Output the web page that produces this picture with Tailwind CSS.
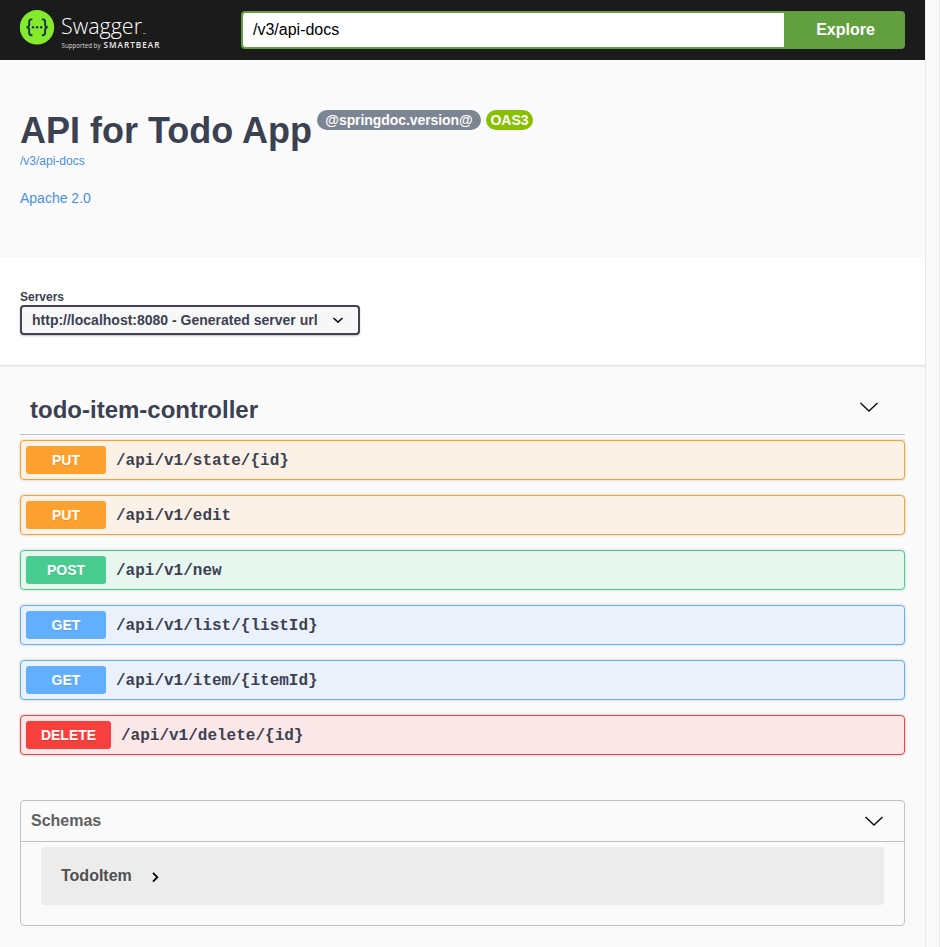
<!DOCTYPE html>
<html lang="en">
<head>
<meta charset="utf-8">
<title>Swagger UI</title>
<script src="https://cdn.jsdelivr.net/npm/@tailwindcss/browser@4"></script>
</head>
<body class="h-[947px] overflow-hidden bg-[#fafafa] font-['Liberation_Sans',Arial,sans-serif] text-[#3b4151]">
<div class="flex h-[947px]">
<div class="w-[925px] shrink-0">
  <header class="flex h-[60px] items-center bg-[#1b1b1b] pl-5 pr-5">
    <svg class="h-[60px] w-[221px] shrink-0" viewBox="20 0 221 60">
      <circle cx="37" cy="27.3" r="17.2" fill="#85ea2d"/>
      <g fill="none" stroke="#173647" stroke-width="1.9">
        <path d="M32.4 19.4h-.9q-2.3 0-2.3 2.4v2.7q0 2.7-2.6 2.8q2.6.1 2.6 2.8v2.7q0 2.4 2.3 2.4h.9"/>
        <path d="M41.9 19.4h.9q2.3 0 2.3 2.4v2.7q0 2.7 2.6 2.8q-2.6.1-2.6 2.8v2.7q0 2.4-2.3 2.4h-.9"/>
      </g>
      <g fill="#173647"><circle cx="33" cy="27.3" r="1.2"/><circle cx="37.1" cy="27.3" r="1.2"/><circle cx="41.2" cy="27.3" r="1.2"/></g>
      <text x="61" y="34.3" font-size="22.5" font-weight="300" textLength="81" lengthAdjust="spacingAndGlyphs" fill="#fff" class="font-['Open_Sans',sans-serif]">Swagger</text>
      <path d="M143 33.5h3" stroke="#999" stroke-width=".8"/>
      <text x="61.5" y="48.3" font-size="6.2" textLength="39" fill="#ddd" class="font-['Open_Sans',sans-serif]">Supported by</text>
      <text x="103.5" y="48.3" font-size="8.2" font-weight="600" textLength="56" fill="#eee" class="font-['Open_Sans',sans-serif]">SMARTBEAR</text>
    </svg>
    <div class="flex h-[38px] w-[664px] overflow-hidden rounded border-2 border-[#62a03f] bg-[#62a03f]">
      <div class="flex w-[541px] items-center rounded-l-[2px] bg-white pl-[10px] pb-px text-base text-black">/v3/api-docs</div>
      <div class="flex flex-1 items-center justify-center pb-px pl-[4px] text-base font-bold text-white">Explore</div>
    </div>
  </header>

  <section class="h-[197px] px-5 pt-[50px]">
    <div class="flex h-[42px] items-start">
      <h1 class="w-[297px] whitespace-nowrap text-[36px] font-bold leading-[42px]">API for Todo App</h1>
      <span class="flex h-5 w-[164px] items-center justify-center rounded-full bg-[#7d8492] text-[14px] font-bold tracking-[-0.07px] text-white">@springdoc.version@</span>
      <span class="ml-[5px] flex h-5 w-[47px] items-center justify-center rounded-full bg-[#89bf04] text-[14px] font-bold text-white">OAS3</span>
    </div>
    <div class="text-[12px] leading-[18px] text-[#4990e2]">/v3/api-docs</div>
    <div class="mt-5 text-[14px] leading-4 text-[#4990e2]">Apache 2.0</div>
  </section>

  <section class="h-[108px] bg-white px-5 pt-8 shadow-[0_1px_2px_rgba(0,0,0,0.15)]">
    <div class="text-[12px] font-bold leading-4">Servers</div>
    <div class="flex h-[30px] w-[340px] items-center rounded border-2 border-[#41444e] bg-[#f7f7f7] pl-[10px] shadow-[0_1px_2px_rgba(0,0,0,0.25)]">
      <span class="w-[300px] whitespace-nowrap text-[14px] font-bold">http://localhost:8080 - Generated server url</span>
      <svg class="h-3 w-3" viewBox="0 0 12 12" fill="none" stroke="#111" stroke-width="1.6"><path d="M1.5 4l4.5 4.1L10.5 4"/></svg>
    </div>
  </section>

  <main class="px-5 pt-[20px]">
    <div class="flex h-[50px] items-center justify-between border-b border-[#bfc0c7] pl-[10px] pr-[26px]">
      <h2 class="text-[24px] font-bold leading-7">todo-item-controller</h2>
      <svg class="mb-[5px] h-5 w-5" viewBox="0 0 20 20" fill="none" stroke="#111" stroke-width="1.5"><path d="M1.5 6l8.5 8L18.5 6"/></svg>
    </div>
    <div class="mt-[5px] flex flex-col gap-[15px] font-bold">
      <div class="flex h-10 items-center rounded border border-[#fca130] bg-[#fbf1e6] pl-[5px] shadow-[0_0_3px_rgba(0,0,0,0.19)]">
        <span class="flex h-7 w-20 items-center justify-center rounded-[3px] bg-[#fca130] text-[14px] text-white [text-shadow:0_1px_0_rgba(0,0,0,0.1)]">PUT</span>
        <span class="ml-[10px] pt-[2px] font-['Liberation_Mono',monospace] text-base">/api/v1/state/{id}</span>
      </div>
      <div class="flex h-10 items-center rounded border border-[#fca130] bg-[#fbf1e6] pl-[5px] shadow-[0_0_3px_rgba(0,0,0,0.19)]">
        <span class="flex h-7 w-20 items-center justify-center rounded-[3px] bg-[#fca130] text-[14px] text-white [text-shadow:0_1px_0_rgba(0,0,0,0.1)]">PUT</span>
        <span class="ml-[10px] pt-[2px] font-['Liberation_Mono',monospace] text-base">/api/v1/edit</span>
      </div>
      <div class="flex h-10 items-center rounded border border-[#49cc90] bg-[#e8f6f0] pl-[5px] shadow-[0_0_3px_rgba(0,0,0,0.19)]">
        <span class="flex h-7 w-20 items-center justify-center rounded-[3px] bg-[#49cc90] text-[14px] text-white [text-shadow:0_1px_0_rgba(0,0,0,0.1)]">POST</span>
        <span class="ml-[10px] pt-[2px] font-['Liberation_Mono',monospace] text-base">/api/v1/new</span>
      </div>
      <div class="flex h-10 items-center rounded border border-[#61affe] bg-[#eaf1fb] pl-[5px] shadow-[0_0_3px_rgba(0,0,0,0.19)]">
        <span class="flex h-7 w-20 items-center justify-center rounded-[3px] bg-[#61affe] text-[14px] text-white [text-shadow:0_1px_0_rgba(0,0,0,0.1)]">GET</span>
        <span class="ml-[10px] pt-[2px] font-['Liberation_Mono',monospace] text-base">/api/v1/list/{listId}</span>
      </div>
      <div class="flex h-10 items-center rounded border border-[#61affe] bg-[#eaf1fb] pl-[5px] shadow-[0_0_3px_rgba(0,0,0,0.19)]">
        <span class="flex h-7 w-20 items-center justify-center rounded-[3px] bg-[#61affe] text-[14px] text-white [text-shadow:0_1px_0_rgba(0,0,0,0.1)]">GET</span>
        <span class="ml-[10px] pt-[2px] font-['Liberation_Mono',monospace] text-base">/api/v1/item/{itemId}</span>
      </div>
      <div class="flex h-10 items-center rounded border border-[#f93e3e] bg-[#fbe7e7] pl-[5px] shadow-[0_0_3px_rgba(0,0,0,0.19)]">
        <span class="flex h-7 w-[85px] items-center justify-center rounded-[3px] bg-[#f93e3e] text-[14px] text-white [text-shadow:0_1px_0_rgba(0,0,0,0.1)]">DELETE</span>
        <span class="ml-[10px] pt-[2px] font-['Liberation_Mono',monospace] text-base">/api/v1/delete/{id}</span>
      </div>
    </div>

    <section class="mt-[45px] h-[126px] rounded border border-[#bfc1c8]">
      <div class="flex h-[41px] items-center justify-between border-b border-[#bfc1c8] pl-[10px] pr-5">
        <h3 class="text-base font-bold text-[#606060]">Schemas</h3>
        <svg class="h-5 w-5" viewBox="0 0 20 20" fill="none" stroke="#111" stroke-width="1.5"><path d="M1.5 6l8.5 8L18.5 6"/></svg>
      </div>
      <div class="mx-5 mt-[5px] flex h-[58px] items-center rounded bg-[#ececec] pl-5">
        <span class="w-[89px] text-base font-bold text-[#505050]">TodoItem</span>
        <svg class="mt-[2px] h-3 w-3" viewBox="0 0 12 12" fill="none" stroke="#000" stroke-width="1.8"><path d="M3 1.8l4.3 4.4L3 10.6"/></svg>
      </div>
    </section>
  </main>
</div>
<aside class="w-[15px] border-x border-[#e8e8e8] bg-[#fafafa]"></aside>
</div>
</body>
</html>
